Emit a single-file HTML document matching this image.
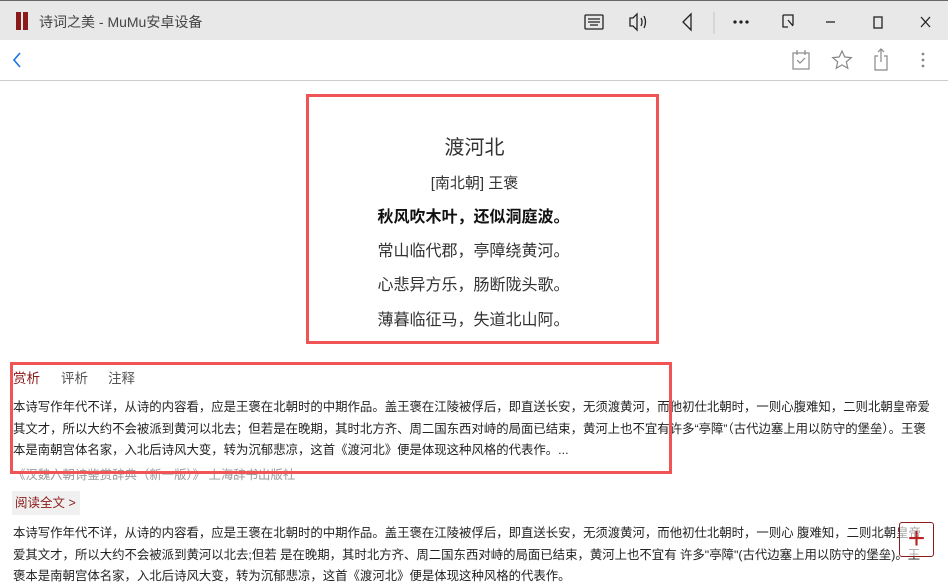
<!DOCTYPE html>
<html><head><meta charset="utf-8"><style>
*{margin:0;padding:0;box-sizing:border-box}
body{width:948px;height:573px;overflow:hidden;background:#fff;font-family:"Liberation Sans","Noto Sans CJK SC",sans-serif;position:relative;color:#333}
.abs{position:absolute}
.tb{left:0;top:0;width:948px;height:40px;background:#e8e8e8;border-top:1px solid #666}
.nav{left:0;top:40px;width:948px;height:41px;background:#fff;border-bottom:1px solid #ccc}
.t{white-space:nowrap}
.box1{left:306px;top:94px;width:353px;height:250px;border:3px solid #f05454}
.box2{left:10px;top:362px;width:662px;height:112px;border:3px solid #f05454}
.poem{left:297px;width:353px;text-align:center;white-space:nowrap;color:#333}
.p{left:13px;width:921px;font-size:12.4px;line-height:21.5px;color:#222}
</style></head><body>
<div class="abs tb">
 <div class="abs" style="left:16px;top:11px;width:5px;height:18px;background:#8b1a1a"></div>
 <div class="abs" style="left:23px;top:11px;width:5px;height:18px;background:#8b1a1a"></div>
 <div class="abs t" style="left:39px;top:11px;font-size:14px;color:#444">诗词之美 - MuMu安卓设备</div>
 <svg class="abs" style="left:580px;top:8px" width="360" height="26" viewBox="0 0 360 26" fill="none" stroke="#222" stroke-width="1.3">
  <rect x="5" y="6" width="18" height="14" rx="1"/><path d="M8 10h12M8 13h12M10 16h8"/>
  <path d="M50 9h3l4-4v16l-4-4h-3zM61 9q2 4 0 8M64 7q3 6 0 12"/>
  <path d="M111 5l-8 8 8 8z"/>
  <path d="M134 3v22" stroke="#ccc"/>
  <circle cx="155" cy="13" r="1" fill="#222"/><circle cx="161" cy="13" r="1" fill="#222"/><circle cx="167" cy="13" r="1" fill="#222"/>
  <path d="M203 6h10v10M203 6v12h5M208 11l5 6"/>
  <path d="M246 13h9"/>
  <rect x="294" y="8" width="8" height="11"/>
  <path d="M341 8l9 10M350 8l-9 10"/>
 </svg>
</div>
<div class="abs nav">
 <svg class="abs" style="left:8px;top:10px" width="20" height="20"><path d="M12 3L6 10l6 7" fill="none" stroke="#1a73e8" stroke-width="1.6"/></svg>
 <svg class="abs" style="left:785px;top:6px" width="150" height="28" fill="none" stroke="#888" stroke-width="1.2">
  <rect x="8" y="7" width="16" height="16"/><path d="M12 4v5M20 4v5M12 14l3 3 5-5"/>
  <path d="M57 5l2.8 6 6.5.6-5 4.3 1.5 6.4-5.8-3.4-5.8 3.4 1.5-6.4-5-4.3 6.5-.6z"/>
  <path d="M93 10h-3v14h12v-14h-3M96 3v13M93 6l3-3 3 3"/>
  <circle cx="138" cy="8" r=".8" fill="#888"/><circle cx="138" cy="14" r=".8" fill="#888"/><circle cx="138" cy="20" r=".8" fill="#888"/>
 </svg>
</div>
<div class="abs box1"></div>
<div class="abs poem" style="top:131px;font-size:20px;left:298px">渡河北</div>
<div class="abs poem" style="top:172px;font-size:15px;left:298px">[南北朝] 王褒</div>
<div class="abs poem" style="top:203px;font-size:16px;font-weight:bold;color:#111">秋风吹木叶，还似洞庭波。</div>
<div class="abs poem" style="top:237px;font-size:16px">常山临代郡，亭障绕黄河。</div>
<div class="abs poem" style="top:271px;font-size:16px">心悲异方乐，肠断陇头歌。</div>
<div class="abs poem" style="top:306px;font-size:16px">薄暮临征马，失道北山阿。</div>
<div class="abs t" style="left:13px;top:367px;font-size:13.5px;color:#8b1a1a">赏析</div>
<div class="abs t" style="left:61px;top:367px;font-size:13.5px;color:#555">评析</div>
<div class="abs t" style="left:108px;top:367px;font-size:13.5px;color:#555">注释</div>
<div class="abs p" style="top:397px">本诗写作年代不详，从诗的内容看，应是王褒在北朝时的中期作品。盖王褒在江陵被俘后，即直送长安，无须渡黄河，而他初仕北朝时，一则心腹难知，二则北朝皇帝爱其文才，所以大约不会被派到黄河以北去；但若是在晚期，其时北方齐、周二国东西对峙的局面已结束，黄河上也不宜有许多“亭障”（古代边塞上用以防守的堡垒）。王褒本是南朝宫体名家，入北后诗风大变，转为沉郁悲凉，这首《渡河北》便是体现这种风格的代表作。...</div>
<div class="abs t" style="left:13px;top:465px;font-size:12.4px;color:#999">《汉魏六朝诗鉴赏辞典（新一版）》 上海辞书出版社</div>
<div class="abs box2"></div>
<div class="abs t" style="left:12px;top:491px;width:68px;height:24px;background:#f0f0f0;color:#8b1a1a;font-size:12.5px;line-height:24px;padding-left:3px">阅读全文 &gt;</div>
<div class="abs p" style="top:523px;width:912px">本诗写作年代不详，从诗的内容看，应是王褒在北朝时的中期作品。盖王褒在江陵被俘后，即直送长安，无须渡黄河，而他初仕北朝时，一则心 腹难知，二则北朝皇帝爱其文才，所以大约不会被派到黄河以北去;但若 是在晚期，其时北方齐、周二国东西对峙的局面已结束，黄河上也不宜有 许多"亭障"(古代边塞上用以防守的堡垒)。王褒本是南朝宫体名家，入北后诗风大变，转为沉郁悲凉，这首《渡河北》便是体现这种风格的代表作。</div>
<div class="abs" style="left:899px;top:522px;width:35px;height:35px;border:1px solid #8b1a1a;border-radius:3px;background:rgba(255,255,255,.6);color:#b22;font-size:30px;line-height:32px;text-align:center">+</div>
</body></html>
